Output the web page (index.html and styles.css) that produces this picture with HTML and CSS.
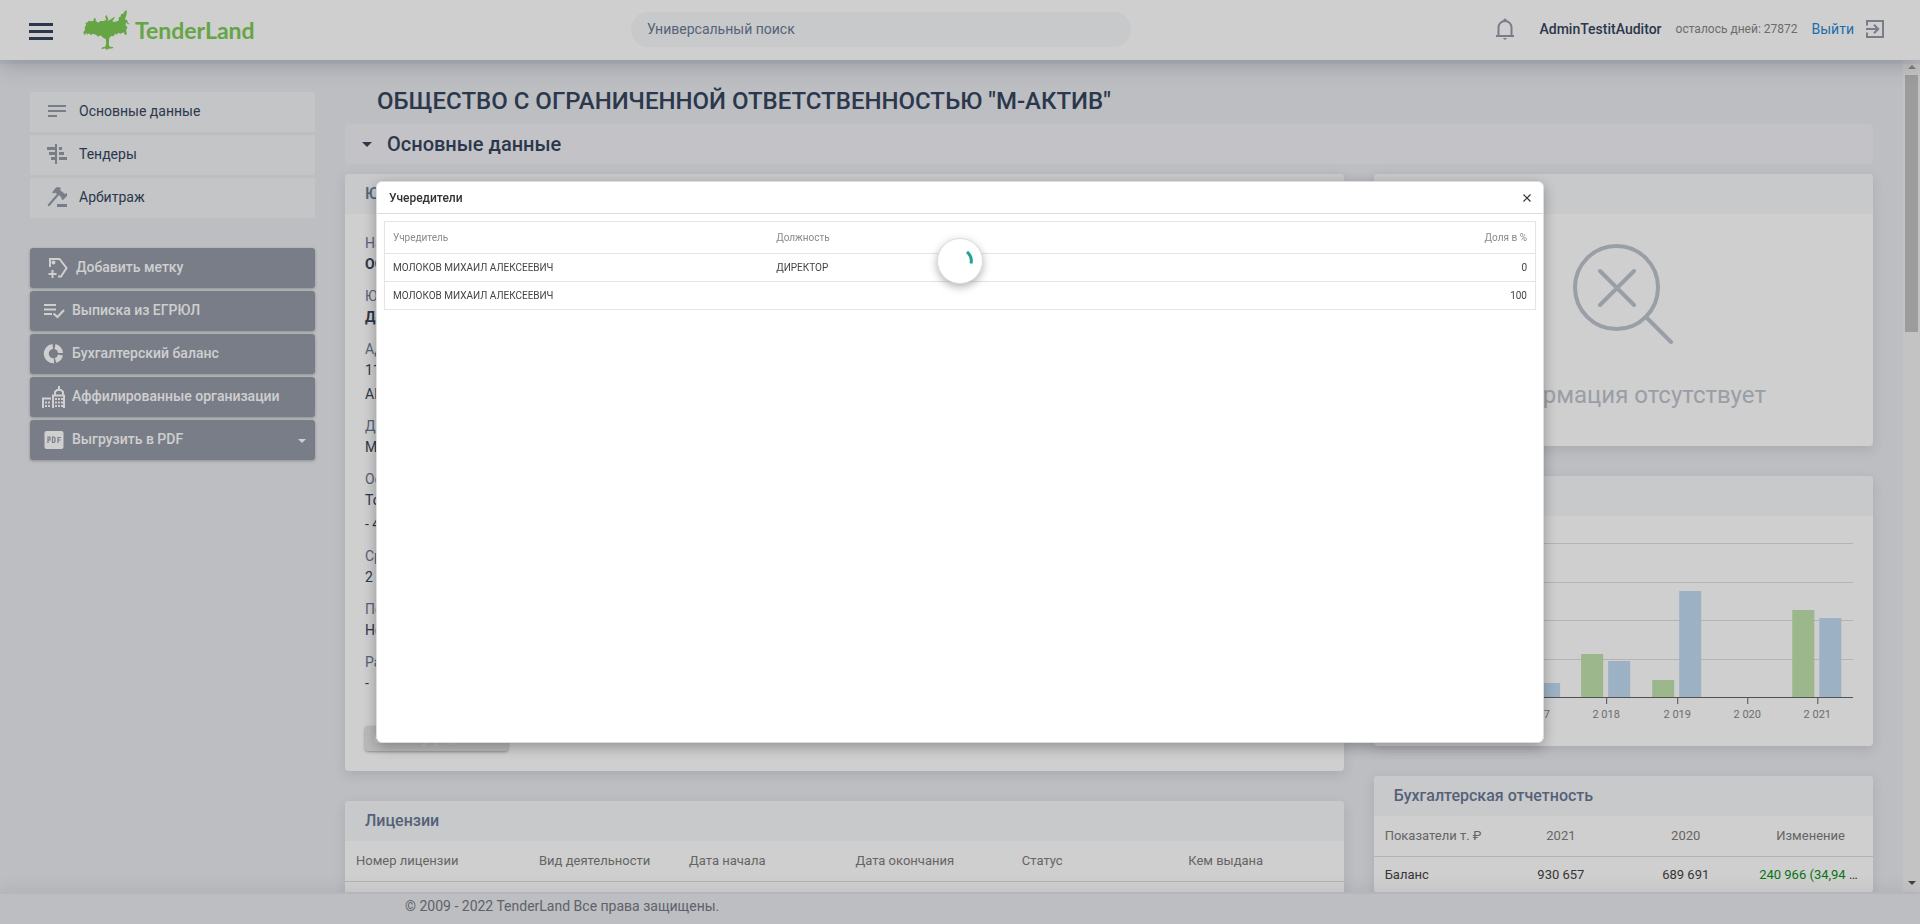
FILE: index.html
```html
<!DOCTYPE html>
<html lang="ru">
<head>
<meta charset="utf-8">
<title>TenderLand</title>
<link rel="stylesheet" href="styles.css">
</head>
<body>
<div class="app">
  <header class="topbar">
    <button class="menu-btn" aria-label="Меню"><span></span><span></span><span></span></button>
    <a class="logo" href="#">
      <svg class="logo-tree" viewBox="0 0 140 120" aria-hidden="true"><path d="M4 76L0 66 5 62 5 50 9 46 7 38 13 37 17 32 24 34 30 33 33 25 38 25 37 31 44 38 52 33 62 33 69 29 66 20 70 14 73 22 76 28 72 33 80 30 88 24 96 20 90 30 88 35 96 35 106 32 107 22 112 20 114 12 119 12 127 1 131 2 130 14 125 28 132 30 134 38 140 42 134 43 129 37 127 46 133 52 129 60 131 72 126 76 122 67 112 71 104 68 102 74 95 71 92 79 84 78 78 85 77 104 80 110 90 111 89 115 76 116 70 120 66 115 54 118 58 112 66 110 69 102 68 88 58 82 52 76 44 80 40 75 28 71 24 76 18 70 12 74 9 68Z"/></svg>
      <span>TenderLand</span>
    </a>
    <input class="search" type="search" placeholder="Универсальный поиск" aria-label="Универсальный поиск">
    <div class="user">
      <button class="bell" aria-label="Уведомления"><svg width="20" height="22" viewBox="0 0 20 22"><path d="M1 18h18M3.500 17.500V9.500a6.500 6.500 0 0 1 13 0v8" fill="none" stroke="currentColor" stroke-width="2"/><circle cx="10" cy="2" r="1.600" fill="currentColor"/><path d="M7.800 20h4.400l-2.200 2z" fill="currentColor"/></svg></button>
      <span class="user-name">AdminTestitAuditor</span>
      <span class="user-days">осталось дней: 27872</span>
      <a class="exit" href="#">Выйти
        <svg width="18" height="18" viewBox="0 0 18 18"><path d="M1 5.500V1h16v16H1v-4.500M0 9h12M8 4.800L12.200 9 8 13.200" fill="none" stroke="currentColor" stroke-width="2"/></svg></a>
    </div>
  </header>

  <div class="viewport">
    <div class="content">
      <aside class="side">
        <nav class="nav">
          <a href="#"><svg width="20" height="20" viewBox="0 0 20 20"><path d="M1 5h18M1 10h18M1 15h9" stroke="currentColor" stroke-width="2"/></svg>Основные данные</a>
          <a href="#"><svg width="20" height="20" viewBox="0 0 20 20" fill="currentColor"><path d="M8 0h2v20H8zM0 3h8v3H0zM12 3h3v3h-3zM2 8h6v3H2zM12 8h5v3h-5zM4 13h4v3H4zM12 13h8v3h-8z"/></svg>Тендеры</a>
          <a href="#"><svg width="20" height="20" viewBox="0 0 20 20" fill="currentColor"><path d="M11 0l3 1-1 2 5 4 2-1v3l-4 4-2-1 1-1-3-3L2 19.500.500 18 10 7 8 5.500l-1 1-2-1 4-5z"/><path d="M10 17h10v3H10z"/></svg>Арбитраж</a>
        </nav>
        <div class="actions">
          <button class="act act-tag"><svg width="24" height="24" viewBox="0 0 24 24" fill="none" stroke="currentColor" stroke-width="2"><path d="M4 12V4h9.500l7 9-5.500 8.500h-3M6.500 15v8M2.500 19h8"/><circle cx="7.500" cy="7.500" r="1"/></svg>Добавить метку</button>
          <button class="act"><svg width="24" height="24" viewBox="0 0 24 24" fill="none" stroke="currentColor" stroke-width="2.200"><path d="M2 7h12M2 11.500h12M2 16h8M11.500 15.500L15.500 19 22 12"/></svg>Выписка из ЕГРЮЛ</button>
          <button class="act"><svg width="24" height="24" viewBox="0 0 24 24" fill="none" stroke="currentColor" stroke-width="5"><path d="M13 5.500A7 7 0 0 1 18.500 12M18.500 14A7 7 0 0 1 13.500 19.400M10.800 5.500A7 7 0 1 0 12 19.800"/></svg>Бухгалтерский баланс</button>
          <button class="act"><svg width="24" height="24" viewBox="0 0 24 24" fill="none" stroke="currentColor" stroke-width="2"><path d="M1 24V14.500h8M11 24V11.500h11V24M13 11V8l2-2h4l2 2v3M17 6V2"/><path d="M3 18.500h5M3 22h5M13 15h8M13 18.500h8M13 22h8" stroke-dasharray="2 1"/></svg>Аффилированные организации</button>
          <button class="act"><svg width="24" height="24" viewBox="0 0 24 24"><rect x="2.500" y="4" width="19" height="18" rx="2" fill="currentColor"/><path d="M6 16v-6h2v3H6M10.500 10v5.500H12l1-1v-3.500l-1-1zM16 16v-5.500h3M16 13h2.500" fill="none" stroke="#949aa8" stroke-width="1.200"/></svg>Выгрузить в PDF<i class="caret"></i></button>
        </div>
      </aside>

      <main class="main">
        <h1>ОБЩЕСТВО С ОГРАНИЧЕННОЙ ОТВЕТСТВЕННОСТЬЮ "М-АКТИВ"</h1>
        <button class="section"><i class="caret"></i>Основные данные</button>
        <div class="columns">
          <div class="col">
            <section class="card">
              <h2>Юридическое лицо</h2>
              <div class="info">
                <dl>
                  <div><dt>Наименование</dt><dd class="strong">ООО "М-АКТИВ"</dd></div>
                  <div><dt>Юридический статус</dt><dd class="strong">Действующее</dd></div>
                  <div><dt>Адрес</dt><dd>117105, город Москва<br>АН</dd></div>
                  <div><dt>Директор</dt><dd>МОЛОКОВ МИХАИЛ АЛЕКСЕЕВИЧ</dd></div>
                  <div><dt>Основной вид деятельности</dt><dd>Торговля оптовая<br>- 46</dd></div>
                  <div><dt>Среднесписочная численность</dt><dd>2</dd></div>
                  <div><dt>Поставщик</dt><dd>Нет</dd></div>
                  <div><dt>Размер</dt><dd>-</dd></div>
                </dl>
                <button class="founders">Список учредителей</button>
              </div>
            </section>
            <section class="card">
              <h2>Лицензии</h2>
              <table class="grid licenses">
                <colgroup><col class="c-num"><col class="c-kind"><col><col><col><col></colgroup>
                <thead><tr><th>Номер лицензии</th><th>Вид деятельности</th><th>Дата начала</th><th>Дата окончания</th><th>Статус</th><th>Кем выдана</th></tr></thead>
                <tbody><tr><td></td><td></td><td></td><td></td><td></td><td></td></tr></tbody>
              </table>
            </section>
          </div>
          <div class="col">
            <section class="card">
              <h2>Надежность</h2>
              <div class="empty">
                <svg width="100" height="100" viewBox="0 0 100 100" fill="none" stroke="currentColor" stroke-width="4" stroke-linecap="round"><circle cx="43.500" cy="43.500" r="41.500"/><path d="M27 27l34 34M61 27L27 61M73 73l25 25"/></svg>
                <p>Информация отсутствует</p>
              </div>
            </section>
            <section class="card">
              <h2>Финансы</h2>
              <div class="chart">
                <svg viewBox="0 0 459 190" role="img" aria-label="Показатели по годам">
                  <path class="gridline" d="M40 7.500H459M40 46.500H459M40 84.500H459M40 123.500H459"/>
                  <g class="bar-a"><path d="M117 161V140h22v21zM187 161V118h22v43zM258 161V144h22v17zM398 161V74h22v87z"/></g>
                  <g class="bar-b"><path d="M144 161V147h22v14zM214 161V125h22v36zM285 161V55h22v106zM425 161V82h22v79z"/></g>
                  <path class="axis" d="M40 161.500H459M142.500 162v6M212.500 162v6M283.500 162v6M353.500 162v6M423.500 162v6"/>
                  <g class="years"><text x="142" y="182">2 017</text><text x="212" y="182">2 018</text><text x="283" y="182">2 019</text><text x="353" y="182">2 020</text><text x="423" y="182">2 021</text></g>
                </svg>
              </div>
            </section>
            <section class="card">
              <h2>Бухгалтерская отчетность</h2>
              <table class="grid report">
                <thead><tr><th>Показатели т. ₽</th><th>2021</th><th>2020</th><th>Изменение</th></tr></thead>
                <tbody><tr><td>Баланс</td><td>930 657</td><td>689 691</td><td><span class="up">240 966 (34,94 %)</span></td></tr></tbody>
              </table>
            </section>
          </div>
        </div>
      </main>
    </div>
    <div class="scroll" aria-hidden="true"><i class="arrow up-arrow"></i><div class="thumb"></div><i class="arrow down-arrow"></i></div>
  </div>
  <footer class="footer">© 2009 - 2022 TenderLand Все права защищены.</footer>
</div>

<div class="shade">
  <div class="modal" role="dialog" aria-labelledby="modal-title">
    <div class="modal-head">
      <h3 id="modal-title">Учередители</h3>
      <button class="close" aria-label="Закрыть"><svg width="8" height="8" viewBox="0 0 8 8"><path d="M.500.500l7 7M7.500.500l-7 7" stroke="currentColor" stroke-width="1.200"/></svg></button>
    </div>
    <div class="modal-body">
      <table class="people">
        <thead><tr><th>Учредитель</th><th>Должность</th><th class="num">Доля в %</th></tr></thead>
        <tbody>
          <tr><td>МОЛОКОВ МИХАИЛ АЛЕКСЕЕВИЧ</td><td>ДИРЕКТОР</td><td class="num">0</td></tr>
          <tr><td>МОЛОКОВ МИХАИЛ АЛЕКСЕЕВИЧ</td><td></td><td class="num">100</td></tr>
        </tbody>
      </table>
      <div class="loader"><svg width="46" height="46" viewBox="0 0 46 46"><path d="M30 14A11.500 11.500 0 0 1 34 25.500" fill="none" stroke="#26a195" stroke-width="3"/></svg></div>
    </div>
  </div>
</div>
</body>
</html>
```
FILE: styles.css
```css
* { box-sizing: border-box; }
body, h1, h2, h3, p, dl, dd { margin: 0; }
body { font-family: Roboto, "Open Sans", sans-serif; font-size: 14px; color: #36455e; background: #e8eaef; }
button, input { font: inherit; border: 0; padding: 0; background: none; color: inherit; }
a { text-decoration: none; color: inherit; }
table { border-collapse: collapse; table-layout: fixed; width: 100%; }

.app { display: grid; grid-template-rows: 60px minmax(0, 1fr) auto; height: 100vh; overflow: hidden; }

.topbar { position: relative; display: flex; align-items: center; padding: 0 36px 0 29px; background: #fff; box-shadow: 0 4px 0 rgba(90, 95, 140, .06), 0 6px 20px rgba(70, 75, 100, .26); }
.menu-btn { display: grid; gap: 4px; width: 24px; margin-top: 2px; }
.menu-btn span { height: 3px; background: #36455e; }
.logo { display: flex; align-items: center; gap: 5px; margin-left: 30px; color: #7dcc54; font: 700 23px/40px Lato, "Open Sans", sans-serif; }
.logo-tree { width: 47px; height: 40px; fill: currentColor; }
.search { position: absolute; left: calc(50% - 329px); top: 12px; width: 500px; height: 35px; padding: 0 16px 2px; border-radius: 18px; background: #f5f8fa; font-size: 14px; }
.search::placeholder { color: #6b7a94; opacity: 1; }
.user { display: flex; align-items: center; margin-left: auto; margin-bottom: 2px; }
.bell, .exit svg { color: #949aa8; }
.bell { height: 22px; margin-right: 24px; }
.user-name { font-weight: 500; margin-right: 14px; }
.user-days { font-size: 12px; color: #868686; margin-right: 14px; }
.exit { display: flex; align-items: center; gap: 12px; color: #2a86d1; }

.viewport { display: flex; min-height: 0; }
.content { flex: 1; display: grid; grid-template-columns: 285px minmax(0, 1fr); gap: 30px; padding: 0 30px; overflow: hidden; }
.side { padding-top: 32px; }
.nav, .actions { display: grid; gap: 3px; }
.nav a { display: flex; align-items: center; gap: 12px; height: 40px; padding: 0 17px 2px; background: #f1f3f5; }
.nav svg { color: #949aa8; }
.actions { margin-top: 30px; }
.act { display: flex; align-items: center; gap: 6px; height: 40px; padding: 0 9px 2px 12px; border-radius: 3px; background: #949aa8; color: #fff; font-weight: 500; box-shadow: 0 1px 3px rgba(0, 0, 0, .25); }
.act-tag { padding-left: 16px; }
.caret { border: 5px solid transparent; border-top-color: currentColor; border-bottom: 0; }
.act .caret { border-width: 4px 4px 0; margin: 4px 0 0 auto; }

h1 { padding: 19px 0 0 32px; font-size: 24px; font-weight: 500; line-height: 45px; }
.section { display: flex; align-items: center; gap: 15px; width: 100%; height: 40px; padding-left: 17px; border-radius: 5px; background: #f0f1f6; font-size: 20px; font-weight: 500; }
.columns { display: grid; grid-template-columns: minmax(0, 2fr) minmax(0, 1fr); gap: 30px; margin-top: 10px; }
.col { display: flex; flex-direction: column; gap: 30px; }
.card { border-radius: 4px; background: #fff; box-shadow: 0 4px 12px rgba(70, 75, 100, .14); }
.card h2 { padding-left: 20px; border-radius: 4px 4px 0 0; background: #f6f8fa; color: #6a7895; font-size: 16px; font-weight: 500; line-height: 40px; }
.info { padding: 20px; }
dl { display: grid; gap: 11px; }
dt { font-size: 14px; line-height: 18px; color: #6a7895; }
dd { font-size: 14px; line-height: 24px; }
.strong { font-weight: 700; }
.founders { margin-top: 31px; width: 143px; height: 25px; border-radius: 3px; background: #e4e4e4; color: #f8f8f8; font-size: 13px; box-shadow: 0 1px 3px rgba(0, 0, 0, .35); }

.grid th, .grid td { height: 40px; padding: 0 11px; font-size: 13px; font-weight: 400; text-align: left; white-space: nowrap; overflow: hidden; text-overflow: ellipsis; }
.grid th { color: #7d7d7d; border-bottom: 1px solid #dcdcdc; }
.grid td { color: #444; height: 37px; }
.c-num { width: 183px; }
.c-kind { width: 150px; }
.report th:not(:first-child), .report td:not(:first-child) { text-align: center; }
.up { color: #0a8f16; }

.empty { display: flex; flex-direction: column; align-items: center; gap: 37px; padding: 30px 0 37px; color: #bec3cd; font-size: 24px; line-height: 28px; }
.chart { padding: 20px; }
.chart svg { display: block; width: 100%; }
.gridline { stroke: #dedede; }
.axis { stroke: #666; fill: none; }
.bar-a { fill: #c0e2ac; }
.bar-b { fill: #c1dbf1; }
.years { font-size: 11px; fill: #888; text-anchor: middle; }

.scroll { display: flex; flex-direction: column; align-items: center; width: 17px; padding: 5px 0 7px; background: #f1f1f1; }
.thumb { width: 13px; height: 257px; margin-top: 6px; background: #c1c1c1; }
.arrow { border: 4px solid transparent; }
.up-arrow { border-top: 0; border-bottom-color: #999; }
.down-arrow { border-bottom: 0; border-top-color: #505050; margin-top: auto; }

.footer { position: relative; height: 32px; padding-left: 405px; border-top: 2px solid #e0e1e6; background: #e8eaef; color: #757982; line-height: 24px; box-shadow: 0 -2px 16px rgba(70, 75, 100, .1); }

.shade { position: fixed; inset: 0; display: grid; place-items: center; background: rgba(0, 0, 0, .19); }
.modal { width: 1168px; max-width: 90vw; height: 562px; max-height: 90vh; border: 1px solid #ddd; border-radius: 6px; background: #fff; box-shadow: 0 4px 14px rgba(0, 0, 0, .3); color: #444; }
.modal-head { display: flex; align-items: center; justify-content: space-between; height: 32px; padding: 0 12px; border-bottom: 1px solid #ddd; color: #333; }
.modal-head h3 { font-size: 12px; font-weight: 500; }
.close { display: flex; }
.modal-body { position: relative; padding: 7px; }
.people { border: 1px solid #e4e4e4; }
.people th, .people td { height: 28px; padding: 0 8px; border-bottom: 1px solid #e4e4e4; font-size: 10px; font-weight: 400; text-align: left; }
.people th { height: 32px; color: #8a8a8a; }
.people .num { text-align: right; }
.loader { position: absolute; left: calc(50% - 23px); top: 24px; width: 46px; height: 46px; border: 1px solid #ddd; border-radius: 50%; background: #fff; box-shadow: 0 3px 8px rgba(0, 0, 0, .3); }
.loader svg { display: block; margin: -1px; }
```
